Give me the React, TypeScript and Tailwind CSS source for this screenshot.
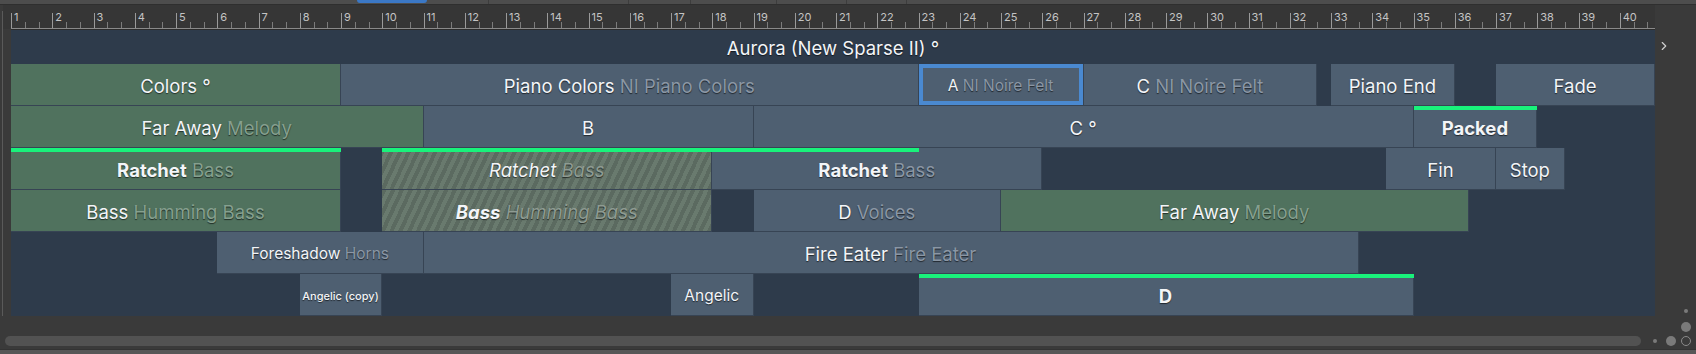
import { Fragment } from 'react';
import { ChevronRight } from 'lucide-react';

// one bar of 3/4 on the arrangement grid
const BAR = 41.25;
const BARS = 40;

type Tone = 'slate' | 'green' | 'hatch';

type Clip = {
  s: number;
  e: number;
  name: string;
  sub?: string;
  tone?: Tone;
  bold?: boolean;
  italic?: boolean;
  size?: 'md' | 'sm' | 'xs';
  bar?: number; // end of the green loop bar
  selected?: boolean;
};

const third = 1 / 3;

const rows: Clip[][] = [
  [
    { s: 1, e: 9, name: 'Colors °', tone: 'green' },
    { s: 9, e: 23, name: 'Piano Colors', sub: 'NI Piano Colors' },
    { s: 23, e: 27, name: 'A', sub: 'NI Noire Felt', size: 'sm', selected: true },
    { s: 27, e: 32 + 2 * third, name: 'C', sub: 'NI Noire Felt' },
    { s: 33, e: 36, name: 'Piano End' },
    { s: 37, e: 40.86, name: 'Fade' },
  ],
  [
    { s: 1, e: 11, name: 'Far Away', sub: 'Melody', tone: 'green' },
    { s: 11, e: 19, name: 'B' },
    { s: 19, e: 35, name: 'C °' },
    { s: 35, e: 38, name: 'Packed', bold: true, bar: 38 },
  ],
  [
    { s: 1, e: 9, name: 'Ratchet', sub: 'Bass', tone: 'green', bold: true, bar: 9 },
    { s: 10, e: 18, name: 'Ratchet', sub: 'Bass', tone: 'hatch', italic: true, bar: 18 },
    { s: 18, e: 26, name: 'Ratchet', sub: 'Bass', bold: true, bar: 23 },
    { s: 34 + third, e: 37, name: 'Fin' },
    { s: 37, e: 38 + 2 * third, name: 'Stop' },
  ],
  [
    { s: 1, e: 9, name: 'Bass', sub: 'Humming Bass', tone: 'green' },
    { s: 10, e: 18, name: 'Bass', sub: 'Humming Bass', tone: 'hatch', italic: true, bold: true },
    { s: 19, e: 25, name: 'D', sub: 'Voices' },
    { s: 25, e: 36 + third, name: 'Far Away', sub: 'Melody', tone: 'green' },
  ],
  [
    { s: 6, e: 11, name: 'Foreshadow', sub: 'Horns', size: 'sm' },
    { s: 11, e: 33 + 2 * third, name: 'Fire Eater', sub: 'Fire Eater' },
  ],
  [
    { s: 8, e: 10, name: 'Angelic (copy)', size: 'xs' },
    { s: 17, e: 19, name: 'Angelic', size: 'sm' },
    { s: 23, e: 35, name: 'D', bold: true, bar: 35 },
  ],
];

const toneBg: Record<Tone, string> = {
  slate: 'bg-[#4e5f71]',
  green: 'bg-[#50725e]',
  hatch:
    'bg-[repeating-linear-gradient(115deg,#5b6a60_0px,#5b6a60_4px,#697a6e_4px,#697a6e_8px)]',
};

const toneSub: Record<Tone, string> = {
  slate: 'text-[#8b97a5]',
  green: 'text-[#86a08f]',
  hatch: 'text-[#8e9b92]',
};

const sizeCls = {
  md: 'text-[18.5px]',
  sm: 'text-[15.5px]',
  xs: 'text-[11px] font-medium',
};

function ClipBox({ c }: { c: Clip }) {
  const tone = c.tone ?? 'slate';
  return (
    <div
      className={`relative shrink-0 h-full flex items-center justify-center border-r border-b border-[#374454] ${toneBg[tone]}`}
      style={{ width: (c.e - c.s) * BAR }}
    >
      {c.bar && (
        <div
          className="absolute left-0 top-0 h-[4px] bg-[#19f27b] z-10"
          style={{ width: (c.bar - c.s) * BAR }}
        />
      )}
      {c.selected && (
        <div className="absolute inset-0 shadow-[inset_0_0_0_4px_#4a89d0] pointer-events-none" />
      )}
      <span
        className={`whitespace-nowrap leading-none pt-[3px] [text-shadow:0_1px_1px_rgba(0,0,0,0.6)] ${sizeCls[c.size ?? 'md']} ${c.italic ? 'italic' : ''}`}
      >
        <span className={`text-[#f3f5f8] ${c.bold ? 'font-bold' : ''}`}>{c.name}</span>
        {c.sub && <span className={`${toneSub[tone]} font-normal`}> {c.sub}</span>}
      </span>
    </div>
  );
}

function Row({ clips }: { clips: Clip[] }) {
  let cur = 1;
  return (
    <div className="flex h-[42px]">
      {clips.map((c, i) => {
        const gap = (c.s - cur) * BAR;
        cur = c.e;
        return (
          <Fragment key={i}>
            {gap > 0 && <div className="shrink-0" style={{ width: gap }} />}
            <ClipBox c={c} />
          </Fragment>
        );
      })}
    </div>
  );
}

function Ruler() {
  const bars = Array.from({ length: BARS + 1 }, (_, i) => i + 1);
  return (
    <div className="h-[24px] flex overflow-hidden border-b border-[#8a8a8a]">
      {bars.map((n) => (
        <div key={n} className="relative shrink-0 h-full flex" style={{ width: BAR }}>
          <div className="w-px h-[15px] mt-auto bg-[#9a9a9a]" />
          {n <= BARS && (
            <span className="absolute left-[3px] top-[7px] text-[11px] leading-none text-[#c4c4c4]">
              {n}
            </span>
          )}
          <div className="absolute bottom-0 left-[13.75px] w-px h-[6px] bg-[#7c7c7c]" />
          <div className="absolute bottom-0 left-[27.5px] w-px h-[6px] bg-[#7c7c7c]" />
        </div>
      ))}
    </div>
  );
}

export default function App() {
  return (
    <div
      className="w-[1696px] h-[354px] bg-[#3a3a3a] overflow-hidden flex flex-col text-white"
      style={{ fontFamily: 'Inter, "Noto Sans", sans-serif' }}
    >
      {/* tab strip */}
      <div className="h-[5px] bg-[#4d4d4d] flex border-b border-[#2f2f2f]">
        <div className="w-[357px]" />
        <div className="w-[70px] h-[3px] bg-[#3b78c6] rounded-b-sm" />
        <div className="w-[62px] border-r border-[#3d3d3d]" />
        <div className="w-[140px] border-r border-[#3d3d3d]" />
        <div className="w-[62px] border-r border-[#3d3d3d]" />
        <div className="w-[86px] border-r border-[#3d3d3d]" />
        <div className="w-[70px] border-r border-[#3d3d3d]" />
        <div className="w-[60px] border-r border-[#3d3d3d]" />
      </div>

      <div className="flex">
        {/* left gutter */}
        <div className="w-[11px] shrink-0 flex">
          <div className="w-[2px]" />
          <div className="w-px bg-[#5a5a5a] mt-[6px]" />
          <div className="flex-1 flex flex-col">
            <div className="h-[24px] bg-[#363636]" />
          </div>
        </div>

        {/* arrangement */}
        <div className="w-[1644px] shrink-0 flex flex-col">
          <div className="bg-[#363636]">
            <Ruler />
          </div>
          <div className="h-px bg-[#2c2c2c]" />
          <div className="bg-[#2e3b4b] overflow-hidden">
            <div className="h-[34px] pt-[3px] flex items-center justify-center text-[18.5px] text-[#f3f5f8] [text-shadow:0_1px_1px_rgba(0,0,0,0.6)]">
              Aurora (New Sparse II) °
            </div>
            {rows.map((r, i) => (
              <Row key={i} clips={r} />
            ))}
          </div>
        </div>

        {/* right edge */}
        <div className="flex-1 relative">
          <ChevronRight className="absolute left-[2px] top-[34px] text-[#cfcfcf]" size={14} strokeWidth={2} />
        </div>
      </div>

      {/* scroll bar + zoom controls */}
      <div className="flex-1 relative">
        <div className="absolute left-[5px] top-[20px] w-[1636px] h-[10px] rounded-full bg-[#525252]" />
        <div className="absolute left-[1684px] top-[-7px] w-[4px] h-[4px] rounded-full bg-[#7a7a7a]" />
        <div className="absolute left-[1681px] top-[6px] w-[10px] h-[10px] rounded-full bg-[#7a7a7a]" />
        <div className="absolute left-[1653px] top-[23px] w-[4px] h-[4px] rounded-full bg-[#7a7a7a]" />
        <div className="absolute left-[1666px] top-[20px] w-[10px] h-[10px] rounded-full bg-[#7a7a7a]" />
        <div className="absolute left-[1681px] top-[20px] w-[10px] h-[10px] rounded-full border border-[#8a8a8a]" />
      </div>
      <div className="h-px bg-[#333333]" />
      <div className="h-[4px] bg-[#575757]" />
    </div>
  );
}
